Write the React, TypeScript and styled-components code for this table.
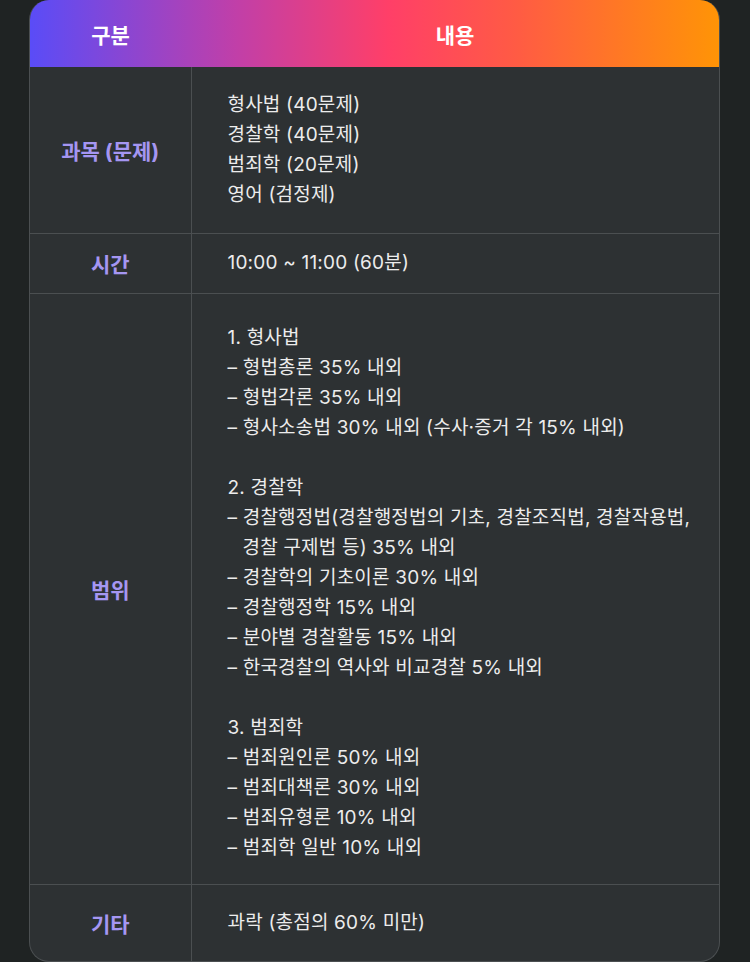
import React from "react";
import styled, { createGlobalStyle } from "styled-components";

const Global = createGlobalStyle`
  html, body { margin: 0; padding: 0; background: #1f2323; }
  body { font-family: Inter, "Noto Sans CJK KR", sans-serif; }
`;

const Page = styled.div`
  padding: 0 30px 0 29px;
  background: #1f2323;
  min-height: 962px;
  box-sizing: border-box;
`;

const Card = styled.div`
  border: 1px solid #4b4f51;
  border-top: none;
  border-radius: 20px;
  overflow: hidden;
  background: #2d3133;
`;

const Table = styled.table`
  width: 100%;
  border-collapse: collapse;
  table-layout: fixed;
`;

const HeadRow = styled.tr`
  background: linear-gradient(90deg, #5a4cf7 0%, #c13fa8 30%, #ff3f68 52%, #ff5a45 70%, #ff9406 100%);
  height: 67px;
`;

const HeadCell = styled.th`
  color: #ffffff;
  font-family: Inter, "Noto Sans CJK KR", sans-serif;
  font-size: 21px;
  font-weight: 700;
  text-align: center;
  padding: 0;
`;

const Row = styled.tr<{ $h: number; $last?: boolean }>`
  height: ${(p) => p.$h}px;
  & > td {
    border-bottom: ${(p) => (p.$last ? "none" : "1px solid #4b4f51")};
  }
`;

const Label = styled.td`
  text-align: center;
  color: #a596f2;
  font-family: Inter, "Noto Sans CJK KR", sans-serif;
  font-size: 21px;
  font-weight: 700;
  border-right: 1px solid #4b4f51;
  vertical-align: middle;
  padding: 0;
`;

const Content = styled.td<{ $pt?: number }>`
  padding: ${(p) => p.$pt ?? 0}px 0 0 36px;
  color: #ececec;
  font-family: Inter, "Noto Sans CJK KR", sans-serif;
  font-size: 19px;
  font-weight: 400;
  letter-spacing: 0.2px;
  line-height: 30px;
  vertical-align: middle;
`;

const Line = styled.div<{ $indent?: boolean }>`
  white-space: nowrap;
  padding-left: ${(p) => (p.$indent ? "15px" : "0")};
`;

const Gap = styled.div`
  height: 30px;
`;

type Item = string | { t: string; indent: true } | null;

const range: Item[] = [
  "1. 형사법",
  "– 형법총론 35% 내외",
  "– 형법각론 35% 내외",
  "– 형사소송법 30% 내외 (수사·증거 각 15% 내외)",
  null,
  "2. 경찰학",
  "– 경찰행정법(경찰행정법의 기초, 경찰조직법, 경찰작용법,",
  { t: "경찰 구제법 등) 35% 내외", indent: true },
  "– 경찰학의 기초이론 30% 내외",
  "– 경찰행정학 15% 내외",
  "– 분야별 경찰활동 15% 내외",
  "– 한국경찰의 역사와 비교경찰 5% 내외",
  null,
  "3. 범죄학",
  "– 범죄원인론 50% 내외",
  "– 범죄대책론 30% 내외",
  "– 범죄유형론 10% 내외",
  "– 범죄학 일반 10% 내외",
];

const renderItems = (items: Item[]) =>
  items.map((it, i) => {
    if (it === null) return <Gap key={i} />;
    if (typeof it === "string") return <Line key={i}>{it}</Line>;
    return (
      <Line key={i} $indent>
        {it.t}
      </Line>
    );
  });

export default function App() {
  return (
    <>
      <Global />
      <Page>
        <Card>
          <Table>
            <colgroup>
              <col style={{ width: "161px" }} />
              <col />
            </colgroup>
            <thead>
              <HeadRow>
                <HeadCell>구분</HeadCell>
                <HeadCell>내용</HeadCell>
              </HeadRow>
            </thead>
            <tbody>
              <Row $h={166}>
                <Label>과목 (문제)</Label>
                <Content>
                  {renderItems(["형사법 (40문제)", "경찰학 (40문제)", "범죄학 (20문제)", "영어 (검정제)"])}
                </Content>
              </Row>
              <Row $h={60}>
                <Label>시간</Label>
                <Content>{renderItems(["10:00 ~ 11:00 (60분)"])}</Content>
              </Row>
              <Row $h={591}>
                <Label>범위</Label>
                <Content $pt={8}>{renderItems(range)}</Content>
              </Row>
              <Row $h={77} $last>
                <Label>기타</Label>
                <Content>{renderItems(["과락 (총점의 60% 미만)"])}</Content>
              </Row>
            </tbody>
          </Table>
        </Card>
      </Page>
    </>
  );
}
